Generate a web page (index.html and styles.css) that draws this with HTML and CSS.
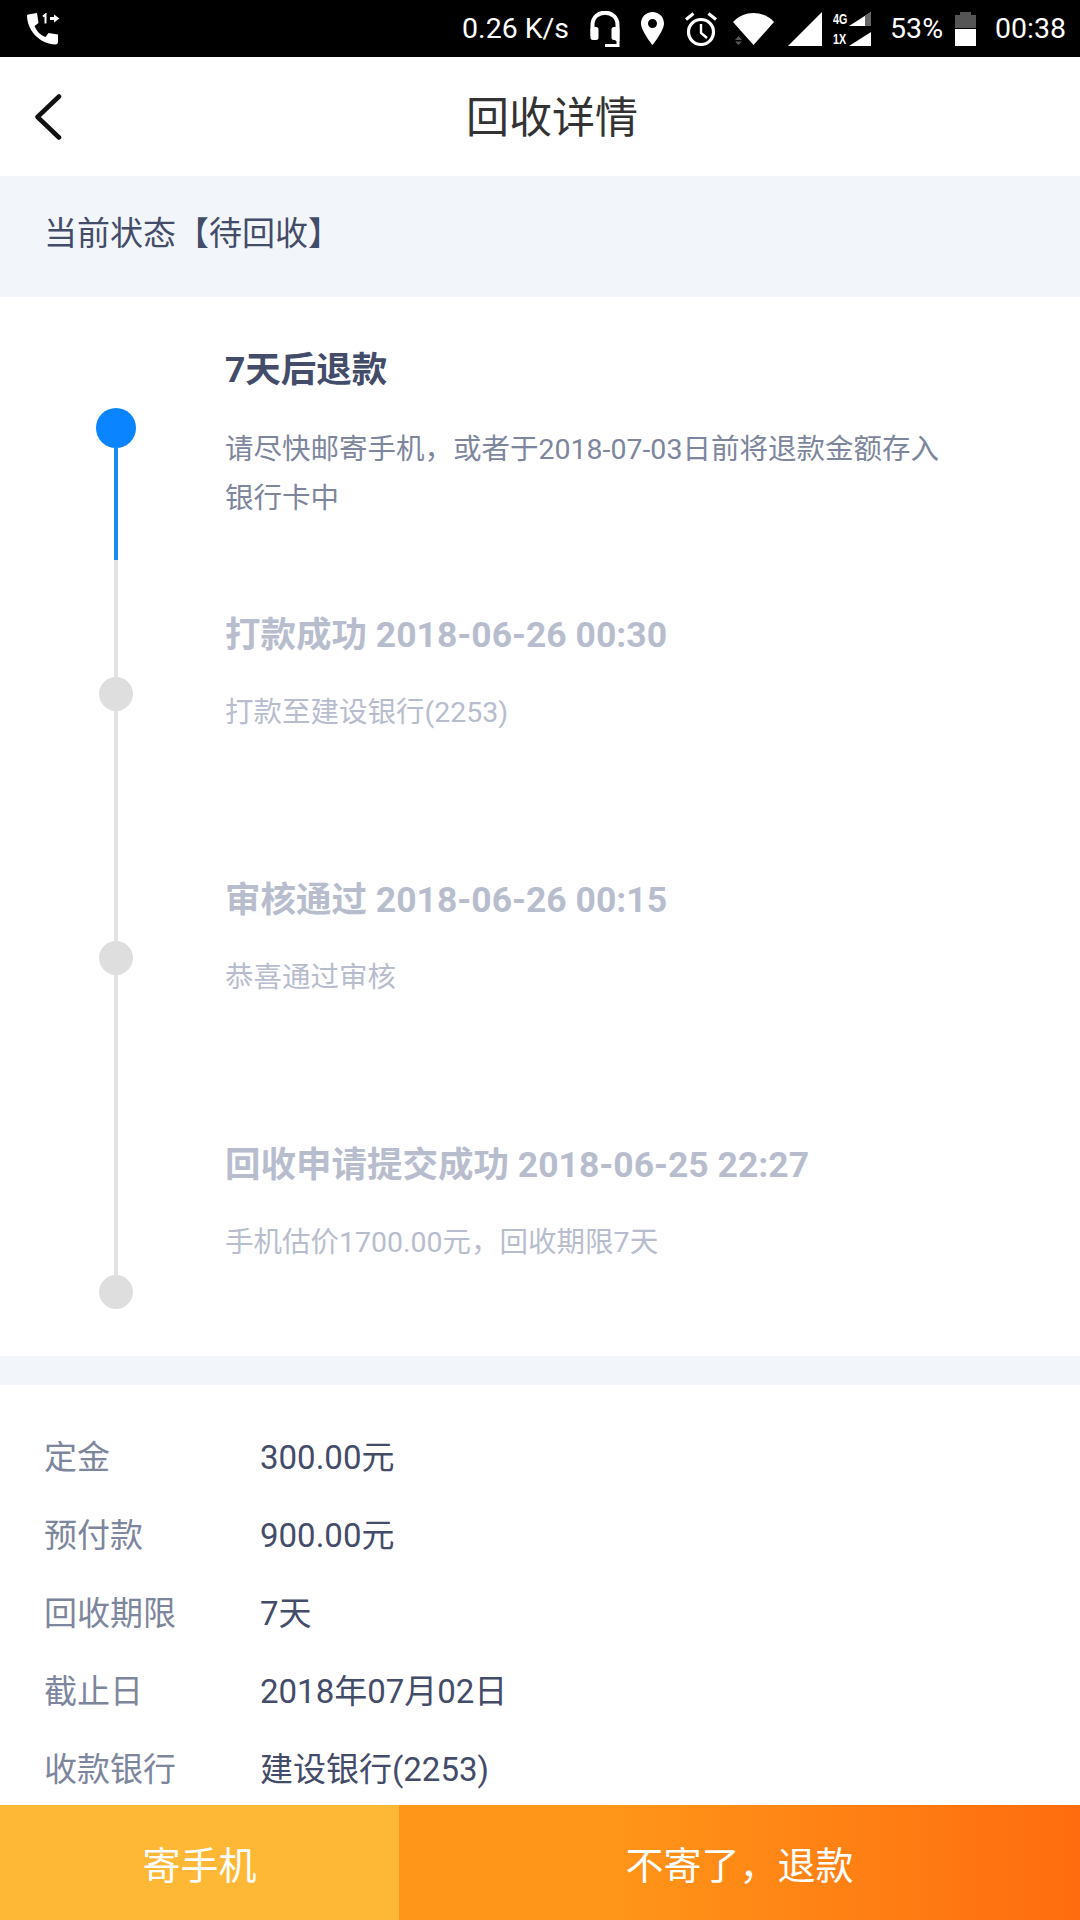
FILE: index.html
```html
<!DOCTYPE html>
<html>
  <head>
    <title>回收详情</title>
    <link rel="stylesheet" href="styles.css">
  </head>
  <body>
    <div class="status-bar">
      <svg class="ic-call" viewBox="0 0 33 32">
        <path d="M1 1.500 L10 0 L11.500 10 L7.500 13 C9.500 18 13.500 22 18.500 24 L21.500 20 L31 21.500 L31 29 C31 30.500 30 31.500 28.500 31.500 C13 31 0.500 18 0 3 C0 2 0.300 1.700 1 1.500 Z" fill="#fff"/>
        <path d="M16 3.500 L18.500 1.500 V10.500" stroke="#fff" stroke-width="2" fill="none"/>
        <path d="M23 4 H27 V1.500 L32.500 5.500 L27 9.500 V7 H23 Z" fill="#fff"/>
      </svg>
      <div class="status-right">
        <span class="net">0.26 K/s</span>
        <svg class="ic-headset" viewBox="0 0 30 36">
          <path d="M2.500 25 V14 C2.500 -2.500 27.500 -2.500 27.500 14 V30" stroke="#fff" stroke-width="4" fill="none"/>
          <rect x="0.500" y="16" width="8" height="13" rx="2.500" fill="#fff"/>
          <rect x="21.500" y="16" width="8" height="13" rx="2.500" fill="#fff"/>
          <path d="M28 28 V34.500 H15" stroke="#fff" stroke-width="3" fill="none"/>
        </svg>
        <svg class="ic-pin" viewBox="0 0 23 33">
          <path fill-rule="evenodd" d="M11.500 0 C18 0 23 5 23 11.500 C23 19 11.500 33 11.500 33 C11.500 33 0 19 0 11.500 C0 5 5 0 11.500 0 Z M11.500 7 A4.500 4.500 0 1 0 11.500 16 A4.500 4.500 0 1 0 11.500 7 Z" fill="#fff"/>
        </svg>
        <svg class="ic-alarm" viewBox="0 0 32 34">
          <circle cx="16" cy="20" r="12.500" stroke="#fff" stroke-width="3.200" fill="none"/>
          <path d="M16 12 V21 L22 26" stroke="#fff" stroke-width="2.400" fill="none"/>
          <path d="M1 7.500 L8.500 1.500 M31 7.500 L23.500 1.500" stroke="#fff" stroke-width="3.200" fill="none"/>
        </svg>
        <svg class="ic-wifi" viewBox="0 0 41 32">
          <path d="M0 9 C11 -3 30 -3 41 9 L20.500 32 Z" fill="#fff"/>
          <path d="M2 27 L5.500 23 L9 27 Z M2 28.500 L5.500 32 L9 28.500 Z" fill="#555"/>
        </svg>
        <svg class="ic-signal" viewBox="0 0 34 34">
          <path d="M34 0 V34 H0 Z" fill="#fff"/>
        </svg>
        <div class="dual-sim">
          <div class="sim-row">
            <span class="sim-label">4G</span>
            <svg class="ic-sim" viewBox="0 0 22 14">
              <path d="M22 0 V14 H0 Z" fill="#fff"/>
              <path d="M22 0 V14 H16 V4 Z" fill="#666"/>
            </svg>
          </div>
          <div class="sim-row">
            <span class="sim-label">1X</span>
            <svg class="ic-sim" viewBox="0 0 22 14">
              <path d="M22 0 V14 H0 Z" fill="#fff"/>
            </svg>
          </div>
        </div>
        <span class="pct">53%</span>
        <svg class="ic-battery" viewBox="0 0 21 34">
          <path d="M5 0 H16 V3 H21 V16 H0 V3 H5 Z" fill="#555"/>
          <rect y="17" width="21" height="17" fill="#fff"/>
        </svg>
        <span class="clock">00:38</span>
      </div>
    </div>

    <div class="nav">
      <svg class="back" viewBox="0 0 28 46">
        <path d="M25 2.500 L3.500 23 L25 43.500" stroke="#111" stroke-width="4.500" stroke-linecap="round" stroke-linejoin="round" fill="none"/>
      </svg>
      <div class="nav-title">回收详情</div>
    </div>

    <div class="state">当前状态【待回收】</div>

    <div class="timeline">
      <div class="rail">
        <div class="dot dot-on"></div>
        <div class="line line-on"></div>
        <div class="line line-a"></div>
        <div class="dot"></div>
        <div class="line line-b"></div>
        <div class="dot"></div>
        <div class="line line-c"></div>
        <div class="dot"></div>
      </div>
      <div class="steps">
        <div class="step step-on">
          <div class="step-title">7天后退款</div>
          <div class="step-desc">请尽快邮寄手机，或者于2018-07-03日前将退款金额存入<br>银行卡中</div>
        </div>
        <div class="step">
          <div class="step-title">打款成功 2018-06-26 00:30</div>
          <div class="step-desc">打款至建设银行(2253)</div>
        </div>
        <div class="step">
          <div class="step-title">审核通过 2018-06-26 00:15</div>
          <div class="step-desc">恭喜通过审核</div>
        </div>
        <div class="step">
          <div class="step-title">回收申请提交成功 2018-06-25 22:27</div>
          <div class="step-desc">手机估价1700.00元，回收期限7天</div>
        </div>
      </div>
    </div>

    <div class="details">
      <div class="row"><span class="label">定金</span><span class="value">300.00元</span></div>
      <div class="row"><span class="label">预付款</span><span class="value">900.00元</span></div>
      <div class="row"><span class="label">回收期限</span><span class="value">7天</span></div>
      <div class="row"><span class="label">截止日</span><span class="value">2018年07月02日</span></div>
      <div class="row"><span class="label">收款银行</span><span class="value">建设银行(2253)</span></div>
    </div>

    <div class="footer">
      <div class="btn btn-send">寄手机</div>
      <div class="btn btn-refund">不寄了，退款</div>
    </div>
  </body>
</html>
```

FILE: styles.css
```css
:root {
  --bg-soft: #f2f5fa;
  --ink: #434c69;
  --ink-soft: #7d869c;
  --ink-off: #b8bdce;
  --dot-off: #dedede;
  --blue: #0a84ff;
}

* {
  box-sizing: border-box;
}

body {
  display: flex;
  flex-direction: column;
  width: 1080px;
  height: 1920px;
  margin: 0;
  overflow: hidden;
  background: #fff;
  font-family: Roboto, "Noto Sans CJK SC", sans-serif;
}

/* Status bar */
.status-bar {
  display: flex;
  flex: none;
  justify-content: space-between;
  align-items: center;
  height: 57px;
  padding: 0 14px 0 27px;
  background: #000;
  color: #fff;
}

.status-right {
  display: flex;
  align-items: center;
  font-size: 28.5px;
}

.ic-call {
  width: 33px;
  height: 32px;
}

.net {
  margin-right: 21px;
}

.ic-headset {
  width: 30px;
  height: 36px;
  margin-right: 21px;
}

.ic-pin {
  width: 23px;
  height: 33px;
  margin-right: 21px;
}

.ic-alarm {
  width: 32px;
  height: 34px;
  margin-right: 16px;
}

.ic-wifi {
  width: 41px;
  height: 32px;
  margin-right: 14px;
}

.ic-signal {
  width: 34px;
  height: 34px;
  margin-right: 11px;
}

.dual-sim {
  display: flex;
  flex-direction: column;
  gap: 6px;
  margin-right: 19px;
}

.sim-row {
  display: flex;
  align-items: flex-end;
  height: 14px;
}

.sim-label {
  width: 16px;
  font-family: "Liberation Sans", sans-serif;
  font-size: 15px;
  font-weight: bold;
  line-height: 14px;
  transform: scaleX(0.72);
  transform-origin: left;
}

.ic-sim {
  width: 22px;
  height: 14px;
}

.pct {
  margin-right: 12px;
}

.ic-battery {
  width: 21px;
  height: 34px;
  margin-right: 19px;
}

/* Nav */
.nav {
  display: flex;
  flex: none;
  align-items: center;
  height: 119px;
  padding: 0 38px 0 34px;
}

.back {
  width: 28px;
  height: 46px;
}

.nav-title {
  flex: 1;
  padding-bottom: 6px;
  text-align: center;
  font-size: 43px;
  color: #333;
}

.state {
  flex: none;
  height: 121px;
  padding-left: 44px;
  background: var(--bg-soft);
  font-size: 33px;
  line-height: 116px;
  color: var(--ink);
}

/* Timeline */
.timeline {
  display: flex;
  flex: none;
  height: 1059px;
}

.rail {
  display: flex;
  flex-direction: column;
  align-items: center;
  width: 40px;
  margin-left: 96px;
  margin-right: 89px;
  padding-top: 111px;
}

.dot {
  flex: none;
  width: 34px;
  height: 34px;
  border-radius: 50%;
  background: var(--dot-off);
}

.dot-on {
  width: 40px;
  height: 40px;
  background: var(--blue);
}

.line {
  flex: none;
  width: 4px;
  background: #e2e2e2;
}

.line-on {
  height: 112px;
  background: #1a8cf0;
}

.line-a {
  height: 117px;
}

.line-b {
  height: 230px;
}

.line-c {
  height: 300px;
}

.steps {
  display: flex;
  flex-direction: column;
  padding-top: 49px;
}

.step {
  flex: none;
  height: 265px;
  color: var(--ink-off);
}

.step-title {
  font-size: 35.5px;
  font-weight: bold;
  line-height: 48px;
}

.step-desc {
  margin-top: 29px;
  font-size: 28.5px;
  line-height: 49px;
}

.step-on .step-title {
  color: var(--ink);
}

.step-on .step-desc {
  margin-top: 31px;
  color: var(--ink-soft);
}

/* Details */
.details {
  flex: 1;
  padding: 31px 44px 0;
  border-top: 29px solid var(--bg-soft);
  overflow: hidden;
}

.row {
  display: flex;
  height: 78px;
  align-items: center;
  font-size: 33px;
}

.label {
  width: 216px;
  color: var(--ink-soft);
}

.value {
  color: var(--ink);
}

/* Footer */
.footer {
  display: flex;
  flex: none;
  height: 115px;
}

.btn {
  display: flex;
  justify-content: center;
  align-items: center;
  font-size: 38px;
  color: #fff;
}

.btn-send {
  width: 399px;
  background: #ffb836;
}

.btn-refund {
  flex: 1;
  background: linear-gradient(90deg, #ff9619 30%, #ff6c0f);
}
```
